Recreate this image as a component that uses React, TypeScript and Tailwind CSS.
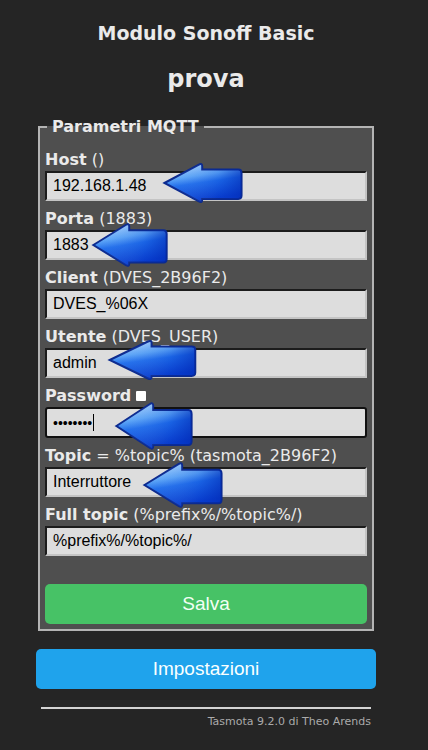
import React from "react";

const verdana = "font-['DejaVu_Sans',Verdana,sans-serif]";
const arial = "font-['Liberation_Sans',Arial,sans-serif]";

type Row = { b: string; rest: string; value: string; pass?: boolean };

const rows: Row[] = [
  { b: "Host", rest: " ()", value: "192.168.1.48" },
  { b: "Porta", rest: " (1883)", value: "1883" },
  { b: "Client", rest: " (DVES_2B96F2)", value: "DVES_%06X" },
  { b: "Utente", rest: " (DVES_USER)", value: "admin" },
  { b: "Password", rest: "", value: "", pass: true },
  { b: "Topic", rest: " = %topic% (tasmota_2B96F2)", value: "Interruttore" },
  { b: "Full topic", rest: " (%prefix%/%topic%/)", value: "%prefix%/%topic%/" },
];

const arrowBoxes = [
  "left-[162px] top-[162px] w-[82px] h-[42px]",
  "left-[91px] top-[222px] w-[78px] h-[46px]",
  "left-[107px] top-[339px] w-[91px] h-[42px]",
  "left-[114px] top-[401px] w-[80px] h-[50px]",
  "left-[142px] top-[461px] w-[82px] h-[48px]",
];

const ARROW =
  "M3 25 L45 3 Q49 1 49 5 L49 9 L93 9 Q97 9 97 13 L97 40 Q97 44 93 44 L49 44 L49 45 Q49 49 45 47 Z";

function Arrow({ cls, id }: { cls: string; id: number }) {
  return (
    <svg className={`absolute ${cls}`} viewBox="0 0 100 50" preserveAspectRatio="none">
      <defs>
        <linearGradient id={`ag${id}`} x1="0" y1="0" x2="0.3" y2="1">
          <stop offset="0" stopColor="#c2e2ff" />
          <stop offset="0.4" stopColor="#5aa4f7" />
          <stop offset="0.58" stopColor="#1f6deb" />
          <stop offset="1" stopColor="#0a3fd0" />
        </linearGradient>
        <linearGradient id={`ah${id}`} x1="0" y1="0" x2="1" y2="0">
          <stop offset="0" stopColor="#ffffff" stopOpacity="0" />
          <stop offset="0.7" stopColor="#0030c0" stopOpacity="0.15" />
          <stop offset="1" stopColor="#0028b0" stopOpacity="0.55" />
        </linearGradient>
      </defs>
      <path
        d={ARROW}
        fill={`url(#ag${id})`}
        stroke="#0b2a8f"
        strokeWidth="2"
        vectorEffect="non-scaling-stroke"
      />
      <path d={ARROW} fill={`url(#ah${id})`} />
    </svg>
  );
}

export default function App() {
  return (
    <div className="relative w-[428px] min-h-[750px] bg-[#252525] overflow-hidden">
      <div className={`ml-[36px] w-[340px] pt-[22px] text-center text-[#eaeaea] ${verdana}`}>
        <h3 className="text-[19px] leading-[22px] font-bold">Modulo Sonoff Basic</h3>
        <h2 className="mt-[21px] text-[24px] leading-[28px] font-bold">prova</h2>

        <fieldset className="mt-[24px] mx-[2px] border-2 border-[#b4b4b4] bg-[#4f4f4f] px-[5px] pt-[14px] pb-[5px] text-left">
          <legend className="ml-[2px] px-[5px] text-[16px] leading-[20px] font-bold">
            Parametri MQTT
          </legend>
          {rows.map((r) => (
            <div key={r.b} className="mb-[9px]">
              <div className="flex items-center text-[16px] leading-[18px]">
                <span>
                  <b>{r.b}</b>
                  {r.rest}
                </span>
                {r.pass && (
                  <span className="ml-[5px] inline-block w-[10px] h-[10px] bg-white rounded-[1px]" />
                )}
              </div>
              {r.pass ? (
                <div
                  className={`mt-[2px] h-[31px] border-2 border-[#111111] rounded-[3px] bg-[#dddddd] flex items-center pl-[6px] text-black ${arial}`}
                >
                  <span className="text-[14px] leading-[16px]">••••••••</span>
                  <span className="ml-[1px] w-[1px] h-[17px] bg-black" />
                </div>
              ) : (
                <div
                  className={`mt-[2px] h-[30px] border-2 border-t-[#1c1c1c] border-l-[#1c1c1c] border-b-[#c4c4c4] border-r-[#c4c4c4] bg-[#dddddd] flex items-center pl-[6px] text-[16px] text-black ${arial}`}
                >
                  {r.value}
                </div>
              )}
            </div>
          ))}
          <button
            className={`mt-[19px] w-full h-[40px] rounded-[5px] bg-[#47c266] text-[#f2fff4] text-[19px] ${arial}`}
          >
            Salva
          </button>
        </fieldset>

        <button
          className={`mt-[18px] w-full h-[40px] rounded-[5px] bg-[#1fa3ec] text-[#faffff] text-[19px] ${arial}`}
        >
          Impostazioni
        </button>

        <div className="mt-[18px] mx-[5px] h-[2px] bg-[#d4d4d4]" />
        <div className="mt-[6px] pr-[5px] text-right text-[11px] leading-[14px] text-[#aaaaaa]">
          Tasmota 9.2.0 di Theo Arends
        </div>
      </div>

      {arrowBoxes.map((c, i) => (
        <Arrow key={i} cls={c} id={i} />
      ))}
    </div>
  );
}
